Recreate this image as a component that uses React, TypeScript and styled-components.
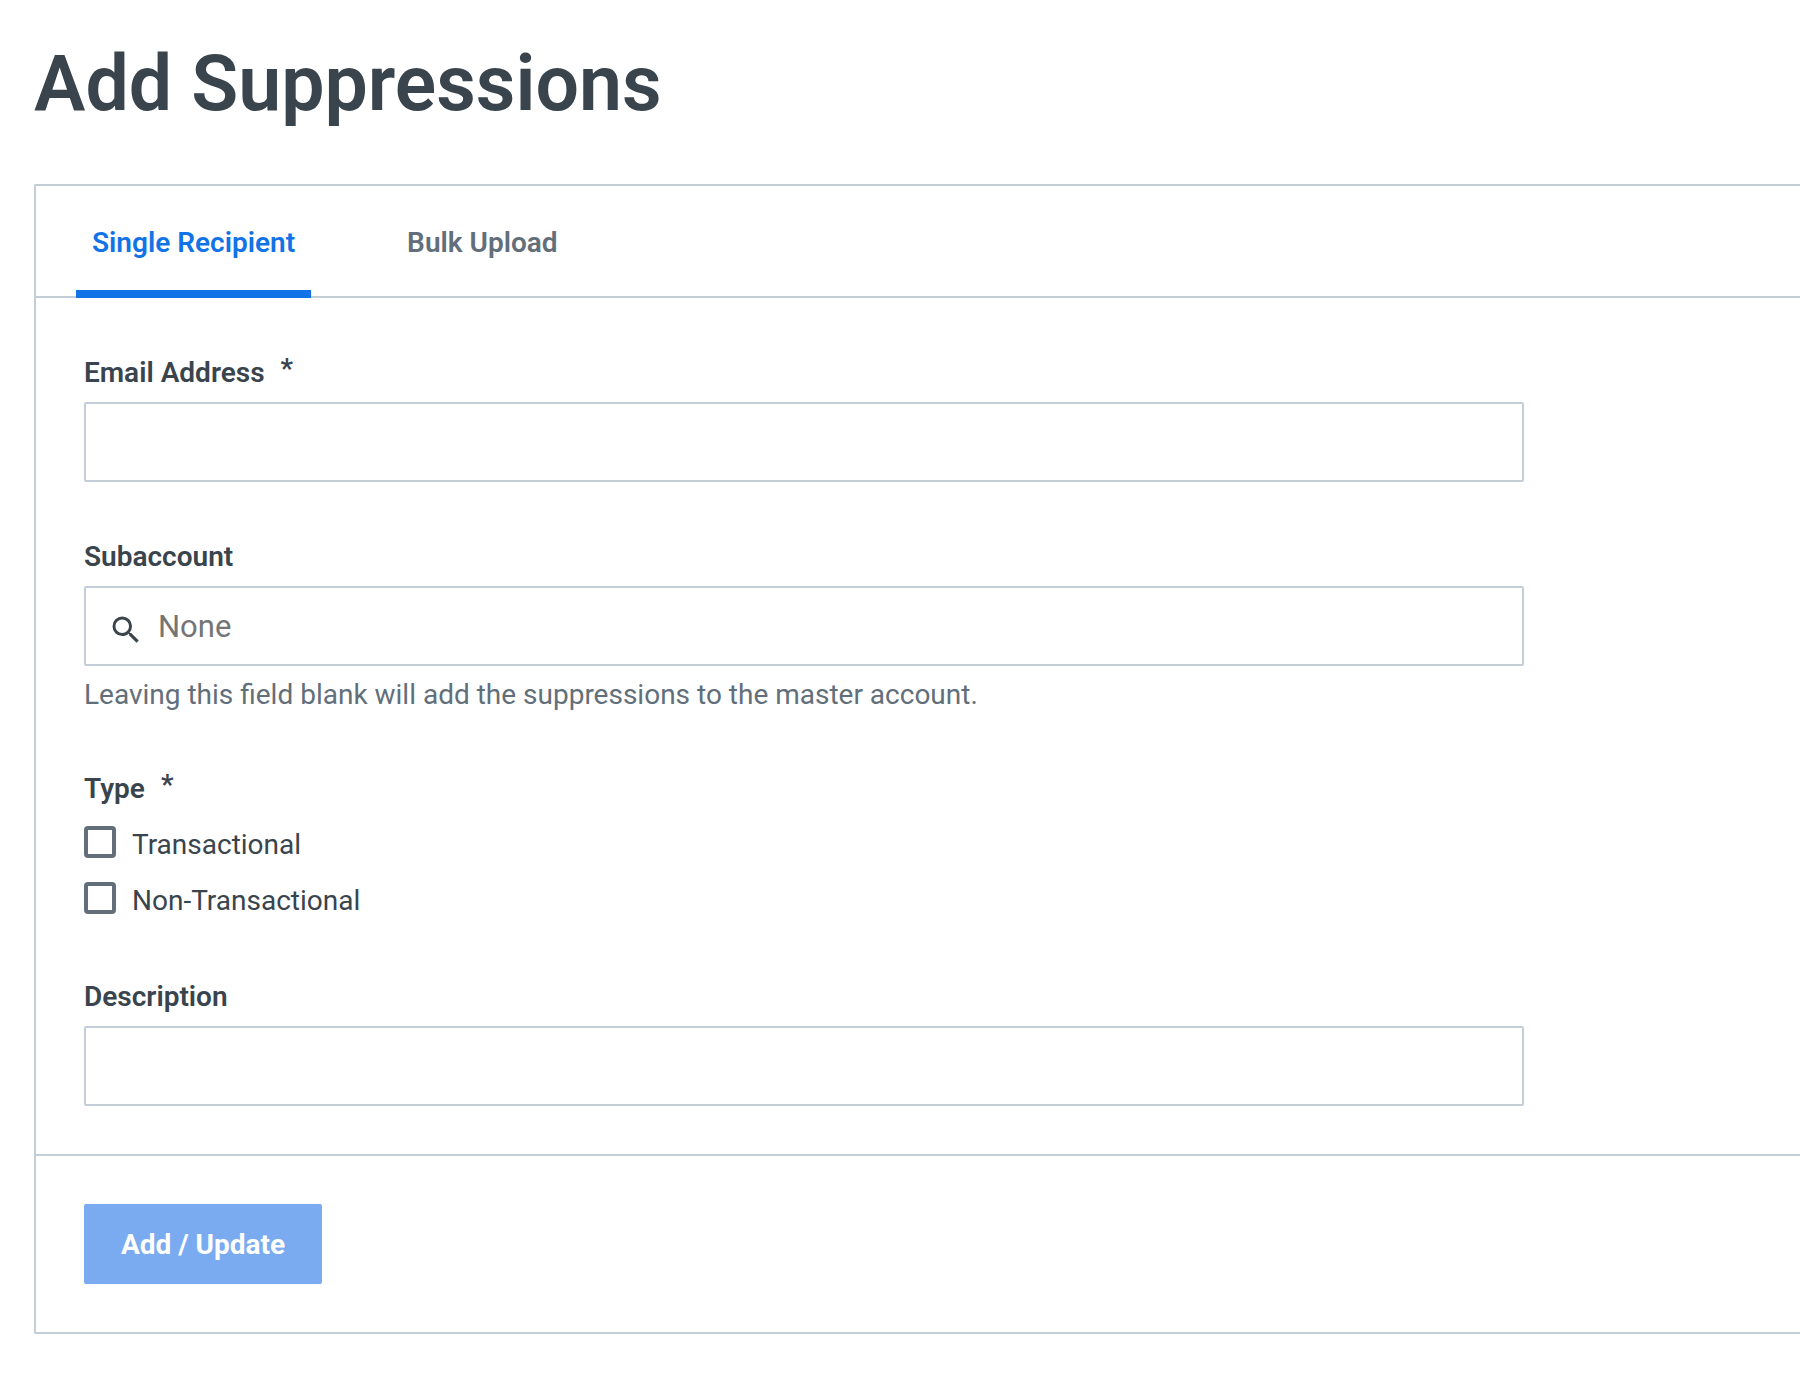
import React, { useState } from "react";
import styled, { createGlobalStyle } from "styled-components";

const ink = "#39444d";
const muted = "#626f7a";
const line = "#c4ced8";
const blue = "#1273e6";

const GlobalStyle = createGlobalStyle`
  *, *::before, *::after { box-sizing: border-box; }
  body {
    margin: 0;
    background: #fff;
    color: ${ink};
    font: 400 28px/42px Roboto, "Liberation Sans", sans-serif;
    -webkit-font-smoothing: antialiased;
    overflow-x: hidden;
  }
  button, input { font: inherit; color: inherit; }
`;

const Page = styled.main`
  padding: 34px 0 52px 34px;
`;

const Title = styled.h1`
  margin: 0 0 50px;
  font-size: 77px;
  line-height: 100px;
  font-weight: 600;
`;

const Card = styled.section`
  border: 2px solid ${line};
  border-right: 0;
  border-radius: 2px 0 0 2px;
`;

const Tabs = styled.div`
  display: flex;
  gap: 80px;
  padding: 0 40px;
  border-bottom: 2px solid ${line};
`;

const Tab = styled.button<{ $active: boolean }>`
  margin: 0 0 -2px;
  padding: 36px 16px 26px;
  border: 0;
  border-bottom: 8px solid ${(p) => (p.$active ? blue : "transparent")};
  background: none;
  color: ${(p) => (p.$active ? blue : muted)};
  font-weight: 600;
  cursor: pointer;
`;

const Fields = styled.div`
  display: flex;
  flex-direction: column;
  gap: 54px;
  padding: 54px 48px 48px;
  border-bottom: 2px solid ${line};
`;

const Field = styled.div`
  max-width: 1440px;
`;

const Label = styled.label`
  display: flex;
  gap: 16px;
  margin-bottom: 8px;
  font-weight: 600;
`;

const Group = styled.fieldset`
  min-width: 0;
  margin: 0;
  padding: 0;
  border: 0;
`;

const Legend = styled.legend`
  display: flex;
  gap: 16px;
  margin-bottom: 14px;
  padding: 0;
  font-weight: 600;
`;

const Required = styled.span`
  line-height: 34px;
`;

const Control = styled.div`
  display: flex;
  align-items: center;
  gap: 14px;
  height: 80px;
  padding: 0 22px;
  border: 2px solid ${line};
  border-radius: 2px;

  &:focus-within { border-color: ${blue}; }
`;

const TextInput = styled.input`
  flex: 1;
  min-width: 0;
  padding: 2px 0 0;
  border: 0;
  outline: 0;
  background: none;
  font-size: 31px;

  &::placeholder { color: #757575; opacity: 1; }
`;

const SearchIcon = styled.svg`
  flex: none;
  width: 36px;
  height: 36px;
  margin-top: 8px;
  fill: ${ink};
`;

const Help = styled.p`
  margin: 8px 0 -2px;
  color: ${muted};
`;

const Options = styled.div`
  display: flex;
  flex-direction: column;
  align-items: flex-start;
  gap: 14px;
`;

const Option = styled.label`
  display: flex;
  align-items: flex-start;
  gap: 16px;
`;

const Checkbox = styled.input`
  appearance: none;
  flex: none;
  width: 32px;
  height: 32px;
  margin: 2px 0 0;
  border: 4px solid ${muted};
  border-radius: 4px;
  background: #fff;

  &:checked {
    border-color: ${blue};
    background: ${blue};
  }
`;

const Footer = styled.div`
  padding: 48px;
`;

const Submit = styled.button`
  display: block;
  min-width: 238px;
  padding: 20px 32px 18px;
  border: 0;
  border-radius: 2px;
  background: #7aabf0;
  color: #fff;
  font-weight: 700;
`;

const tabs = ["Single Recipient", "Bulk Upload"];

export default function App() {
  const [active, setActive] = useState(tabs[0]);
  return (
    <>
      <GlobalStyle />
      <Page>
        <Title>Add Suppressions</Title>
        <Card>
          <Tabs role="tablist">
            {tabs.map((name) => (
              <Tab
                key={name}
                type="button"
                role="tab"
                aria-selected={active === name}
                $active={active === name}
                onClick={() => setActive(name)}
              >
                {name}
              </Tab>
            ))}
          </Tabs>
          <form onSubmit={(e) => e.preventDefault()}>
            <Fields>
              <Field>
                <Label htmlFor="email">
                  Email Address <Required>*</Required>
                </Label>
                <Control>
                  <TextInput id="email" type="email" required />
                </Control>
              </Field>
              <Field>
                <Label htmlFor="subaccount">Subaccount</Label>
                <Control>
                  <SearchIcon viewBox="0 0 24 24" aria-hidden="true">
                    <path d="M15.5 14h-.79l-.28-.27A6.47 6.47 0 0 0 16 9.5 6.5 6.5 0 1 0 9.5 16c1.61 0 3.09-.59 4.23-1.57l.27.28v.79l5 4.99L20.49 19l-4.99-5zm-6 0C7.01 14 5 11.99 5 9.5S7.01 5 9.5 5 14 7.01 14 9.5 11.99 14 9.5 14z" />
                  </SearchIcon>
                  <TextInput id="subaccount" type="text" placeholder="None" aria-describedby="subaccount-help" />
                </Control>
                <Help id="subaccount-help">
                  Leaving this field blank will add the suppressions to the master account.
                </Help>
              </Field>
              <Group>
                <Legend>
                  Type <Required>*</Required>
                </Legend>
                <Options>
                  <Option htmlFor="transactional">
                    <Checkbox id="transactional" type="checkbox" />
                    Transactional
                  </Option>
                  <Option htmlFor="non-transactional">
                    <Checkbox id="non-transactional" type="checkbox" />
                    Non-Transactional
                  </Option>
                </Options>
              </Group>
              <Field>
                <Label htmlFor="description">Description</Label>
                <Control>
                  <TextInput id="description" type="text" />
                </Control>
              </Field>
            </Fields>
            <Footer>
              <Submit type="submit" disabled>
                Add / Update
              </Submit>
            </Footer>
          </form>
        </Card>
      </Page>
    </>
  );
}
